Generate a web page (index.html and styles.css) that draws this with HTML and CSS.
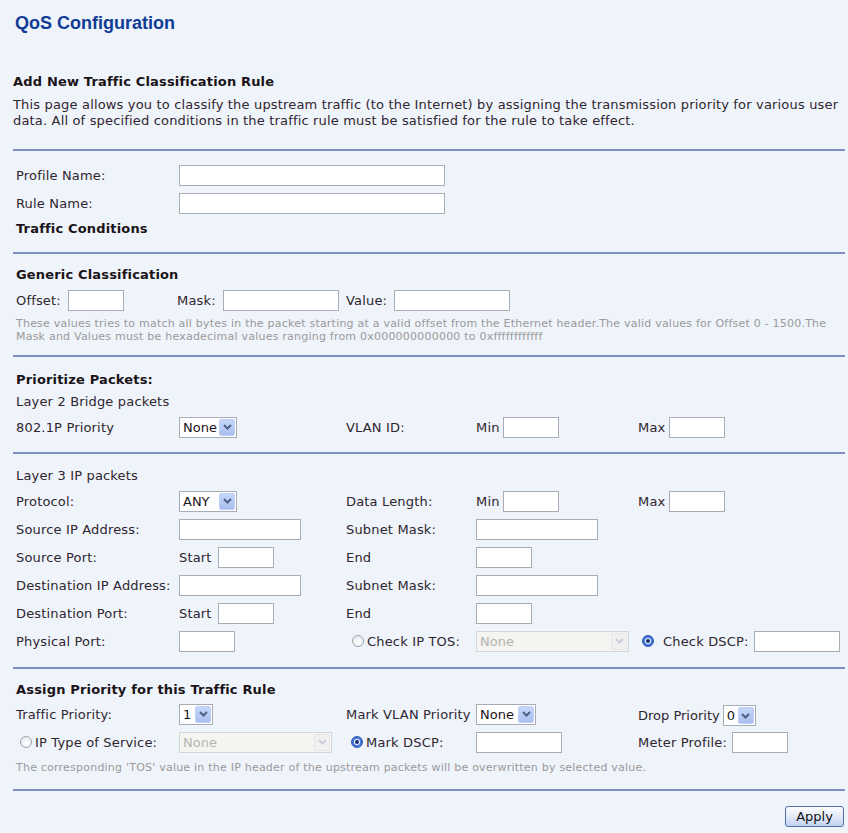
FILE: index.html
```html
<!DOCTYPE html>
<html>
<head>
<meta charset="utf-8">
<title>QoS Configuration</title>
<link rel="stylesheet" href="styles.css">
</head>
<body>
<div class="page">
  <h1 class="title">QoS Configuration</h1>
  <h2 class="intro-head">Add New Traffic Classification Rule</h2>
  <p class="intro">
    <span class="line">This page allows you to classify the upstream traffic (to the Internet) by assigning the transmission priority for various user</span>
    <span class="line">data. All of specified conditions in the traffic rule must be satisfied for the rule to take effect.</span>
  </p>

  <div class="rule"></div>
  <section class="sec sec-names">
    <div class="row">
      <div class="cell">Profile Name:</div>
      <div class="cell span4"><span class="inp w265"></span></div>
    </div>
    <div class="row">
      <div class="cell">Rule Name:</div>
      <div class="cell span4"><span class="inp w265"></span></div>
    </div>
    <div class="head tc">Traffic Conditions</div>
  </section>

  <div class="rule"></div>
  <section class="sec sec-generic">
    <div class="head">Generic Classification</div>
    <div class="row">
      <div class="cell">Offset:&nbsp;<span class="inp w55 g3"></span></div>
      <div class="cell shift">Mask:&nbsp;<span class="inp w115 g3"></span></div>
      <div class="cell span3">Value:&nbsp;<span class="inp w115 g3"></span></div>
    </div>
    <p class="hint">These values tries to match all bytes in the packet starting at a valid offset from the Ethernet header.The valid values for Offset 0 - 1500.The<br>Mask and Values must be hexadecimal values ranging from 0x000000000000 to 0xffffffffffff</p>
  </section>

  <div class="rule"></div>
  <section class="sec sec-l2">
    <div class="head">Prioritize Packets:</div>
    <div class="text">Layer 2 Bridge packets</div>
    <div class="row">
      <div class="cell">802.1P Priority</div>
      <div class="cell"><span class="sel w58"><span class="sel-val">None</span><span class="sel-btn"><svg width="9" height="6" viewBox="0 0 9 6"><path d="M1 1l3.5 3.5L8 1" fill="none" stroke="#4d6185" stroke-width="2"/></svg></span></span></div>
      <div class="cell">VLAN ID:</div>
      <div class="cell">Min&nbsp;<span class="inp w55 gm1"></span></div>
      <div class="cell">Max&nbsp;<span class="inp w55 gm1"></span></div>
    </div>
  </section>

  <div class="rule"></div>
  <section class="sec sec-l3">
    <div class="text">Layer 3 IP packets</div>
    <div class="row">
      <div class="cell">Protocol:</div>
      <div class="cell"><span class="sel w58"><span class="sel-val">ANY</span><span class="sel-btn"><svg width="9" height="6" viewBox="0 0 9 6"><path d="M1 1l3.5 3.5L8 1" fill="none" stroke="#4d6185" stroke-width="2"/></svg></span></span></div>
      <div class="cell">Data Length:</div>
      <div class="cell">Min&nbsp;<span class="inp w55 gm1"></span></div>
      <div class="cell">Max&nbsp;<span class="inp w55 gm1"></span></div>
    </div>
    <div class="row">
      <div class="cell">Source IP Address:</div>
      <div class="cell"><span class="inp w121"></span></div>
      <div class="cell">Subnet Mask:</div>
      <div class="cell span2"><span class="inp w121"></span></div>
    </div>
    <div class="row">
      <div class="cell">Source Port:</div>
      <div class="cell">Start&nbsp;<span class="inp w55 g2"></span></div>
      <div class="cell">End</div>
      <div class="cell span2"><span class="inp w55"></span></div>
    </div>
    <div class="row">
      <div class="cell">Destination IP Address:</div>
      <div class="cell"><span class="inp w121"></span></div>
      <div class="cell">Subnet Mask:</div>
      <div class="cell span2"><span class="inp w121"></span></div>
    </div>
    <div class="row">
      <div class="cell">Destination Port:</div>
      <div class="cell">Start&nbsp;<span class="inp w55 g2"></span></div>
      <div class="cell">End</div>
      <div class="cell span2"><span class="inp w55"></span></div>
    </div>
    <div class="row">
      <div class="cell">Physical Port:</div>
      <div class="cell"><span class="inp w55"></span></div>
      <div class="cell radio-cell"><span class="radio"></span>Check IP TOS:</div>
      <div class="cell"><span class="sel dis w153"><span class="sel-val">None</span><span class="sel-btn"><svg width="9" height="6" viewBox="0 0 9 6"><path d="M1 1l3.5 3.5L8 1" fill="none" stroke="#c9cdd6" stroke-width="2"/></svg></span></span></div>
      <div class="cell radio-cell r5"><span class="radio on"></span>Check DSCP:&nbsp;<span class="inp w85 g1"></span></div>
    </div>
  </section>

  <div class="rule"></div>
  <section class="sec sec-assign">
    <div class="head">Assign Priority for this Traffic Rule</div>
    <div class="row">
      <div class="cell">Traffic Priority:</div>
      <div class="cell"><span class="sel w34"><span class="sel-val">1</span><span class="sel-btn"><svg width="9" height="6" viewBox="0 0 9 6"><path d="M1 1l3.5 3.5L8 1" fill="none" stroke="#4d6185" stroke-width="2"/></svg></span></span></div>
      <div class="cell">Mark VLAN Priority</div>
      <div class="cell"><span class="sel w60"><span class="sel-val">None</span><span class="sel-btn"><svg width="9" height="6" viewBox="0 0 9 6"><path d="M1 1l3.5 3.5L8 1" fill="none" stroke="#4d6185" stroke-width="2"/></svg></span></span></div>
      <div class="cell low drop">Drop Priority<span class="sel w33"><span class="sel-val">0</span><span class="sel-btn"><svg width="9" height="6" viewBox="0 0 9 6"><path d="M1 1l3.5 3.5L8 1" fill="none" stroke="#4d6185" stroke-width="2"/></svg></span></span></div>
    </div>
    <div class="row">
      <div class="cell radio-cell r1"><span class="radio"></span>IP Type of Service:</div>
      <div class="cell"><span class="sel dis w153"><span class="sel-val">None</span><span class="sel-btn"><svg width="9" height="6" viewBox="0 0 9 6"><path d="M1 1l3.5 3.5L8 1" fill="none" stroke="#c9cdd6" stroke-width="2"/></svg></span></span></div>
      <div class="cell radio-cell r3"><span class="radio on"></span>Mark DSCP:</div>
      <div class="cell"><span class="inp w85"></span></div>
      <div class="cell">Meter Profile:&nbsp;<span class="inp w55 g1"></span></div>
    </div>
    <p class="hint">The corresponding 'TOS' value in the IP header of the upstream packets will be overwritten by selected value.</p>
  </section>

  <div class="rule"></div>
  <div class="actions">
    <button class="btn" type="button">Apply</button>
  </div>
</div>
</body>
</html>
```

FILE: styles.css
```css
html, body {
  margin: 0;
  padding: 0;
  background: #eff3fa;
}

body {
  font-family: "DejaVu Sans", Verdana, sans-serif;
  font-size: 13px;
  letter-spacing: 0.17px;
  color: #2f2630;
}

.page {
  padding: 0 3px 0 13px;
}

.title {
  margin: 0;
  padding: 12px 0 0 2px;
  font-family: "Liberation Sans", Arial, sans-serif;
  font-size: 18px;
  line-height: 22px;
  font-weight: bold;
  letter-spacing: 0;
  color: #103c96;
}

.intro-head {
  margin: 40px 0 0;
  font-size: 13px;
  line-height: 16px;
  font-weight: bold;
  color: #1a1418;
}

.intro {
  margin: 7px 0 0;
  line-height: 16px;
  height: 32px;
}

.intro .line {
  display: block;
  white-space: nowrap;
}

.rule {
  height: 2px;
  background: #7e8fc2;
  margin-top: 20px;
}

.sec {
  padding: 13px 0 0 3px;
}

.sec-names {
  padding-top: 10px;
}

.sec-l2 {
  padding-top: 15px;
}

.sec-l3 {
  padding-top: 14px;
}

.sec-names + .rule {
  margin-top: 15px;
}

.sec-generic + .rule,
.sec-l3 + .rule {
  margin-top: 12px;
}

.sec-l2 + .rule {
  margin-top: 11px;
}

.sec-assign + .rule {
  margin-top: 15px;
}

.head {
  font-weight: bold;
  line-height: 16px;
  height: 19px;
  color: #1a1418;
}

.head.tc {
  height: 16px;
  margin-top: 4px;
}

.sec-l2 .head {
  height: 22px;
}

.sec-assign .head {
  height: 18px;
}

.text {
  line-height: 16px;
  height: 19px;
}

.row {
  display: grid;
  grid-template-columns: 163px 167px 130px 162px 1fr;
  align-items: center;
  height: 28px;
}

.cell {
  display: flex;
  align-items: center;
  white-space: nowrap;
}

.cell.shift {
  margin-left: -2px;
}

.span2 { grid-column: span 2; }
.span3 { grid-column: span 3; }
.span4 { grid-column: span 4; }

.low {
  padding-top: 3px;
}

.drop {
  letter-spacing: 0;
}

.drop .sel {
  margin-left: 3px;
}

.inp {
  display: inline-block;
  box-sizing: border-box;
  height: 21px;
  background: #fff;
  border: 1px solid #a7acb6;
}

.g1 { margin-left: 1px; }
.g2 { margin-left: 2px; }
.g3 { margin-left: 3px; }
.gm1 { margin-left: -1px; }

.w55 { width: 56px; }
.w85 { width: 86px; }
.w115 { width: 116px; }
.w121 { width: 122px; }
.w265 { width: 266px; }

.sel {
  display: inline-flex;
  box-sizing: border-box;
  height: 21px;
  background: #fff;
  border: 1px solid #a7acb6;
  align-items: stretch;
  letter-spacing: 0;
}

.sel-val {
  flex: 1;
  padding-left: 3px;
  line-height: 19px;
  color: #1a1418;
}

.sel-btn {
  width: 16px;
  margin: 1px;
  box-sizing: border-box;
  border: 1px solid #c0cff5;
  border-radius: 2px;
  background: linear-gradient(#c6d6fb, #aabfef);
  display: flex;
  align-items: center;
  justify-content: center;
}

.w58 { width: 58px; }
.w60 { width: 60px; }
.w34 { width: 34px; }
.w33 { width: 33px; }
.w153 { width: 153px; }

.sel.dis {
  background: #f4f4f0;
  border-color: #d3d5dc;
}

.sel.dis .sel-val {
  color: #b4b4b4;
}

.sel.dis .sel-btn {
  background: #f1f1f1;
  border-color: #e6e6e6;
}

.radio-cell .radio {
  margin-right: 3px;
}

.radio-cell {
  margin-left: 6px;
}

.radio-cell.r1 {
  margin-left: 4px;
}

.radio-cell.r3 {
  margin-left: 5px;
}

.radio-cell.r5 {
  margin-left: 4px;
}

.radio-cell.r5 .radio {
  margin-right: 9px;
}

.radio {
  position: relative;
  display: inline-block;
  box-sizing: border-box;
  width: 12px;
  height: 12px;
  border-radius: 50%;
  border: 1px solid #9da3ad;
  background: radial-gradient(circle at 60% 65%, #ffffff, #e3e4e8);
}

.radio.on {
  border-color: #2d55ad;
  background: radial-gradient(circle at 50% 50%, #6d9af0, #2c5fcc);
}

.radio.on::after {
  content: "";
  position: absolute;
  left: 3px;
  top: 3px;
  width: 4px;
  height: 4px;
  border-radius: 50%;
  background: #132f72;
  box-shadow: 0 0 0 1px #f2f6ff;
}

.hint {
  margin: 3px 0 0;
  font-size: 11px;
  line-height: 13px;
  letter-spacing: 0.22px;
  color: #9a9a9a;
}

.sec-assign .hint {
  margin-top: 5px;
}

.actions {
  display: flex;
  justify-content: flex-end;
  padding: 15px 1px 0 0;
}

.btn {
  width: 59px;
  height: 21px;
  padding: 0;
  font-family: "DejaVu Sans", Verdana, sans-serif;
  font-size: 13px;
  color: #111;
  border: 1px solid #4f6fae;
  border-radius: 3px;
  background: linear-gradient(#fbfcfe 0%, #e6ecf8 45%, #c2d2f1 100%);
}
```
